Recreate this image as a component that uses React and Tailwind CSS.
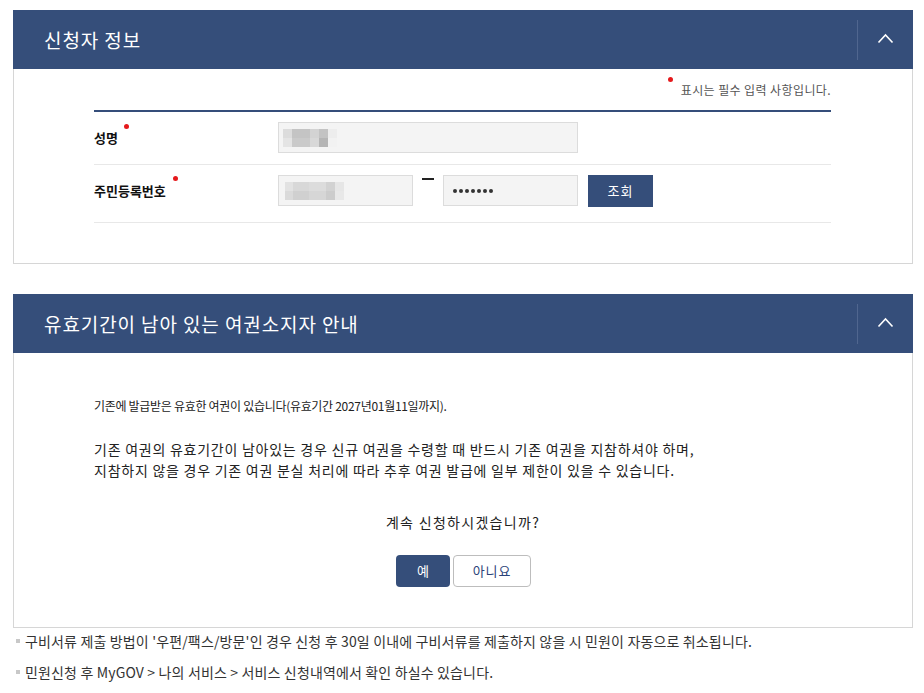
import React from 'react';

const NAVY = 'bg-[#354e7a]';

// 헤더 우측 접기 버튼
const Chevron = () => (
  <svg width="17" height="11" viewBox="0 0 17 11" fill="none">
    <polyline points="1.5,9.5 8.5,2 15.5,9.5" stroke="#ffffff" strokeWidth="1.6" strokeLinejoin="miter" />
  </svg>
);

const SectionHeader = ({ title }) => (
  <div className={`${NAVY} h-[59px] flex items-center`}>
    <h2 className="flex-1 pl-[31px] text-[19px] text-white leading-[24px] tracking-[0.9px]">{title}</h2>
    <div className="w-px h-[40px] bg-[#50668f]" />
    <div className="w-[55px] h-full flex items-center justify-center pb-[2px]">
      <Chevron />
    </div>
  </div>
);

const RedDot = ({ className = '' }) => (
  <span className={`absolute w-[5px] h-[5px] rounded-full bg-[#e5191c] ${className}`} />
);

// 모자이크 처리된 입력값
const Mosaic = ({ cells }) => (
  <div className="flex flex-col">
    {cells.map((row, i) => (
      <div key={i} className="flex">
        {row.map(([w, c], j) => (
          <div key={j} className="h-[9px]" style={{ width: w, background: c }} />
        ))}
      </div>
    ))}
  </div>
);

const nameCells = [
  [[9, '#dcdcdc'], [18, '#c4c4c4'], [9, '#d3d3d3'], [9, '#c3c3c3'], [9, '#ededed']],
  [[9, '#e4e4e4'], [18, '#cacaca'], [9, '#d8d8d8'], [9, '#b5b5b5'], [9, '#f2f2f2']],
];

const idCells = [
  [[8, '#e2e2e2'], [16, '#d8d8d8'], [17, '#dcdcdc'], [9, '#d2d2d2'], [9, '#e6e6e6']],
  [[8, '#dadada'], [16, '#d0d0d0'], [17, '#d6d6d6'], [9, '#cccccc'], [9, '#e8e8e8']],
];

export default function App() {
  return (
    <div
      className="w-[924px] h-[693px] overflow-hidden bg-white pt-[10px] pl-[13px] text-[#222]"
      style={{ fontFamily: '"Noto Sans CJK KR", "Noto Sans", "Liberation Sans", sans-serif' }}
    >
      {/* 신청자 정보 */}
      <section className="w-[900px]">
        <SectionHeader title="신청자 정보" />
        <div className="border border-t-0 border-[#d6d6d6] pb-[40px]">
          <div className="ml-[80px] w-[737px]">
            <div className="h-[41px] flex items-center justify-end">
              <span className="relative text-[12px] leading-[16px] tracking-[0.4px] text-[#555] pl-[13px]">
                <RedDot className="left-0 -top-[5px]" />
                표시는 필수 입력 사항입니다.
              </span>
            </div>
            <div className={`h-[2px] ${NAVY}`} />

            <div className="h-[53px] border-b border-[#e8e8e8] flex items-start pt-[10px]">
              <div className="w-[184px] h-[31px] flex items-center">
                <span className="relative text-[13px] font-bold leading-[16px] tracking-[0px] text-[#111]">
                  성명
                  <RedDot className="-right-[11px] -top-[6px]" />
                </span>
              </div>
              <div className="w-[300px] h-[31px] bg-[#f4f4f4] border border-[#dcdcdc] flex items-center pl-[4px]">
                <Mosaic cells={nameCells} />
              </div>
            </div>

            <div className="h-[58px] border-b border-[#e8e8e8] flex items-start pt-[10px]">
              <div className="w-[184px] h-[31px] flex items-center">
                <span className="relative text-[13px] font-bold leading-[16px] tracking-[0px] text-[#111]">
                  주민등록번호
                  <RedDot className="-right-[12px] -top-[7px]" />
                </span>
              </div>
              <div className="w-[135px] h-[31px] bg-[#f4f4f4] border border-[#dcdcdc] flex items-center pl-[6px]">
                <Mosaic cells={idCells} />
              </div>
              <div className="w-[30px] h-[31px] flex justify-center">
                <div className="w-[12px] h-[1.5px] bg-[#222] mt-[3px]" />
              </div>
              <div className="w-[135px] h-[31px] bg-[#f4f4f4] border border-[#dcdcdc] flex items-center pl-[9px] gap-[2px]">
                {Array.from({ length: 7 }).map((_, i) => (
                  <span key={i} className="w-[4px] h-[4px] rounded-full bg-[#333]" />
                ))}
              </div>
              <button className={`ml-[10px] w-[65px] h-[32px] ${NAVY} text-white text-[13px] leading-[16px] tracking-[1px]`}>
                조회
              </button>
            </div>
          </div>
        </div>
      </section>

      {/* 유효기간이 남아 있는 여권소지자 안내 */}
      <section className="w-[900px] mt-[30px]">
        <SectionHeader title="유효기간이 남아 있는 여권소지자 안내" />
        <div className="border border-t-0 border-[#d6d6d6] pl-[80px] pt-[45px] pb-[40px]">
          <p className="text-[12px] leading-[16px] tracking-[-0.3px] text-[#222]">
            기존에 발급받은 유효한 여권이 있습니다(유효기간 2027년01월11일까지).
          </p>
          <p className="mt-[25px] text-[14px] leading-[21px] tracking-[0.75px] text-[#222]">
            기존 여권의 유효기간이 남아있는 경우 신규 여권을 수령할 때 반드시 기존 여권을 지참하셔야 하며,
            <br />
            지참하지 않을 경우 기존 여권 분실 처리에 따라 추후 여권 발급에 일부 제한이 있을 수 있습니다.
          </p>
          <p className="mt-[31px] -ml-[80px] text-center text-[14px] leading-[21px] tracking-[1.3px] text-[#222]">
            계속 신청하시겠습니까?
          </p>
          <div className="mt-[22px] -ml-[80px] flex justify-center gap-[3px] pl-[1px]">
            <button className={`w-[54px] h-[32px] rounded-[4px] ${NAVY} text-white text-[13px]`}>예</button>
            <button className="w-[78px] h-[32px] rounded-[4px] border border-[#bdbdbd] bg-white text-[#2b4379] text-[13px] tracking-[0.8px]">
              아니요
            </button>
          </div>
        </div>
      </section>

      <ul className="mt-[3px] text-[14px] leading-[20px] tracking-[0.15px] text-[#333]">
        <li className="flex items-center gap-[5px] pl-[3px]">
          <span className="w-[4px] h-[4px] bg-[#c8c8c8] shrink-0" />
          구비서류 제출 방법이 '우편/팩스/방문'인 경우 신청 후 30일 이내에 구비서류를 제출하지 않을 시 민원이 자동으로 취소됩니다.
        </li>
        <li className="flex items-center gap-[5px] pl-[3px] mt-[11px]">
          <span className="w-[4px] h-[4px] bg-[#c8c8c8] shrink-0" />
          민원신청 후 MyGOV &gt; 나의 서비스 &gt; 서비스 신청내역에서 확인 하실수 있습니다.
        </li>
      </ul>
    </div>
  );
}
